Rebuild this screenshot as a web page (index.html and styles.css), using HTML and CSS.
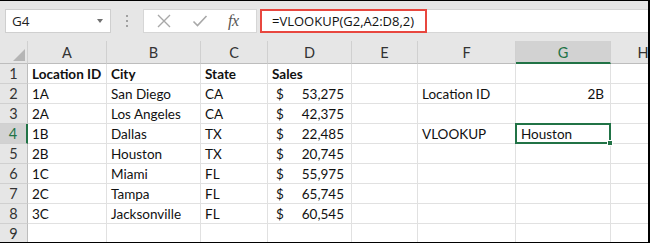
FILE: index.html
```html
<!DOCTYPE html>
<html>
<head>
<meta charset="utf-8">
<link rel="stylesheet" href="styles.css">
</head>
<body>
<div class="frame">
  <div class="toolbar">
    <div class="namebox"><span class="nb-text">G4</span><span class="nb-arrow"></span></div>
    <div class="dots"><span></span><span></span><span></span></div>
    <div class="fbtns">
      <svg class="ic" width="14" height="14" viewBox="0 0 14 14"><path d="M1 1L13 13M13 1L1 13" stroke="#a8a8a8" stroke-width="1.4" fill="none"/></svg>
      <svg class="ic" width="16" height="14" viewBox="0 0 16 14"><path d="M1.5 7.5L5.5 11.5L14.5 2" stroke="#a8a8a8" stroke-width="1.6" fill="none"/></svg>
      <span class="fx">fx</span>
    </div>
    <div class="formula"><span class="ftext">=VLOOKUP(G2,A2:D8,2)</span></div>
  </div>
  <div class="sheet">
    <div class="hd corner"><span class="tri"></span></div>
    <div class="hd">A</div><div class="hd">B</div><div class="hd">C</div><div class="hd">D</div><div class="hd">E</div><div class="hd">F</div><div class="hd sel">G</div><div class="hd last">H</div>

    <div class="rh">1</div><div class="c b">Location ID</div><div class="c b">City</div><div class="c b">State</div><div class="c b">Sales</div><div class="c"></div><div class="c"></div><div class="c"></div><div class="c last"></div>

    <div class="rh">2</div><div class="c">1A</div><div class="c">San Diego</div><div class="c">CA</div><div class="c acc"><span>$</span><span>53,275</span></div><div class="c"></div><div class="c">Location ID</div><div class="c r">2B</div><div class="c last"></div>

    <div class="rh">3</div><div class="c">2A</div><div class="c">Los Angeles</div><div class="c">CA</div><div class="c acc"><span>$</span><span>42,375</span></div><div class="c"></div><div class="c"></div><div class="c"></div><div class="c last"></div>

    <div class="rh selr">4</div><div class="c">1B</div><div class="c">Dallas</div><div class="c">TX</div><div class="c acc"><span>$</span><span>22,485</span></div><div class="c"></div><div class="c">VLOOKUP</div><div class="c active">Houston<span class="handle"></span></div><div class="c last"></div>

    <div class="rh">5</div><div class="c">2B</div><div class="c">Houston</div><div class="c">TX</div><div class="c acc"><span>$</span><span>20,745</span></div><div class="c"></div><div class="c"></div><div class="c"></div><div class="c last"></div>

    <div class="rh">6</div><div class="c">1C</div><div class="c">Miami</div><div class="c">FL</div><div class="c acc"><span>$</span><span>55,975</span></div><div class="c"></div><div class="c"></div><div class="c"></div><div class="c last"></div>

    <div class="rh">7</div><div class="c">2C</div><div class="c">Tampa</div><div class="c">FL</div><div class="c acc"><span>$</span><span>65,745</span></div><div class="c"></div><div class="c"></div><div class="c"></div><div class="c last"></div>

    <div class="rh">8</div><div class="c">3C</div><div class="c">Jacksonville</div><div class="c">FL</div><div class="c acc"><span>$</span><span>60,545</span></div><div class="c"></div><div class="c"></div><div class="c"></div><div class="c last"></div>

    <div class="rh">9</div><div class="c"></div><div class="c"></div><div class="c"></div><div class="c"></div><div class="c"></div><div class="c"></div><div class="c"></div><div class="c last"></div>
  </div>
</div>
</body>
</html>
```
FILE: styles.css
```css
* { box-sizing: border-box; }
html, body { margin: 0; padding: 0; background: #000; }
body { width: 650px; height: 243px; overflow: hidden; }
.frame {
  width: 648px;
  height: 241px;
  margin-top: 1px;
  background: #fff;
  overflow: hidden;
  font-family: Lato, "Liberation Sans", sans-serif;
}
.toolbar {
  height: 40px;
  background: #e6e6e6;
  display: flex;
  align-items: flex-start;
  padding-top: 8px;
  padding-left: 5px;
}
.namebox {
  width: 106px;
  height: 24px;
  background: #fff;
  border: 1px solid #cfcfcf;
  display: flex;
  align-items: center;
  justify-content: space-between;
  padding: 0 7px 0 6px;
  font-family: "Open Sans", sans-serif;
  font-size: 13.5px;
  color: #222;
}
.nb-arrow {
  width: 0; height: 0;
  border-left: 3.5px solid transparent;
  border-right: 3.5px solid transparent;
  border-top: 4px solid #707070;
}
.dots {
  width: 32px;
  height: 24px;
  display: flex;
  flex-direction: column;
  align-items: center;
  justify-content: center;
  gap: 3px;
}
.dots span { width: 2px; height: 2px; background: #a0a0a0; }
.fbtns {
  width: 114px;
  height: 24px;
  background: #fff;
  border: 1px solid #d6d6d6;
  display: flex;
  align-items: center;
  padding-left: 13px;
}
.fbtns .ic { display: block; }
.fbtns .ic:nth-child(2) { margin-left: 21px; }
.fx {
  margin-left: 20px;
  font-family: "Liberation Serif", serif;
  font-style: italic;
  font-size: 16px;
  color: #555;
  letter-spacing: -0.5px;
}
.formula {
  margin-left: 3px;
  flex: 1;
  height: 24px;
  background: #fff;
  border: 1px solid #d6d6d6;
  border-right: none;
  display: flex;
}
.ftext {
  margin-left: -1px;
  margin-top: -1px;
  height: 24px;
  width: 167px;
  border: 2px solid #e8473f;
  display: flex;
  align-items: center;
  padding-left: 10px;
  font-family: "Open Sans", sans-serif;
  font-size: 13px;
  color: #111;
}
.sheet {
  display: grid;
  grid-template-columns: 28px 79px 94px 67px 84px 66px 98px 95px 64px;
  grid-template-rows: 23px repeat(9, 20px);
  font-size: 13.5px;
  color: #111;
}
.hd {
  background: #e6e6e6;
  border-right: 1px solid #d0d0d0;
  border-bottom: 1px solid #bdbdbd;
  display: flex;
  align-items: center;
  justify-content: center;
  font-size: 14.5px;
  color: #333;
  padding-top: 1px;
}
.hd.sel {
  background: #d2d2d2;
  border-bottom: 2px solid #217346;
  color: #217346;
}
.hd.last { border-right: none; }
.corner { justify-content: flex-end; align-items: flex-end; padding: 0 2px 2px 0; }
.tri {
  width: 0; height: 0;
  border-left: 12px solid transparent;
  border-bottom: 12px solid #b5b5b5;
}
.rh {
  background: #e6e6e6;
  border-right: 1px solid #bdbdbd;
  border-bottom: 1px solid #d0d0d0;
  display: flex;
  align-items: center;
  justify-content: center;
  font-size: 14.5px;
  color: #333;
}
.rh.selr {
  background: #d2d2d2;
  border-right: 2px solid #217346;
  color: #217346;
}
.c {
  border-right: 1px solid #e1e1e1;
  border-bottom: 1px solid #e1e1e1;
  display: flex;
  align-items: center;
  padding-left: 4px;
  white-space: nowrap;
  overflow: hidden;
}
.c.last { border-right: none; }
.c.b { font-weight: 700; }
.c.r { justify-content: flex-end; padding-right: 6px; }
.c.acc { justify-content: space-between; padding-left: 8px; padding-right: 7px; }
.c.active {
  position: relative;
  overflow: visible;
  border: 2px solid #217346;
  margin: -1px 0 0 -1px;
  padding-left: 4px;
}
.handle {
  position: absolute;
  right: -4px;
  bottom: -4px;
  width: 6px;
  height: 6px;
  background: #217346;
  border: 1px solid #fff;
}
```
